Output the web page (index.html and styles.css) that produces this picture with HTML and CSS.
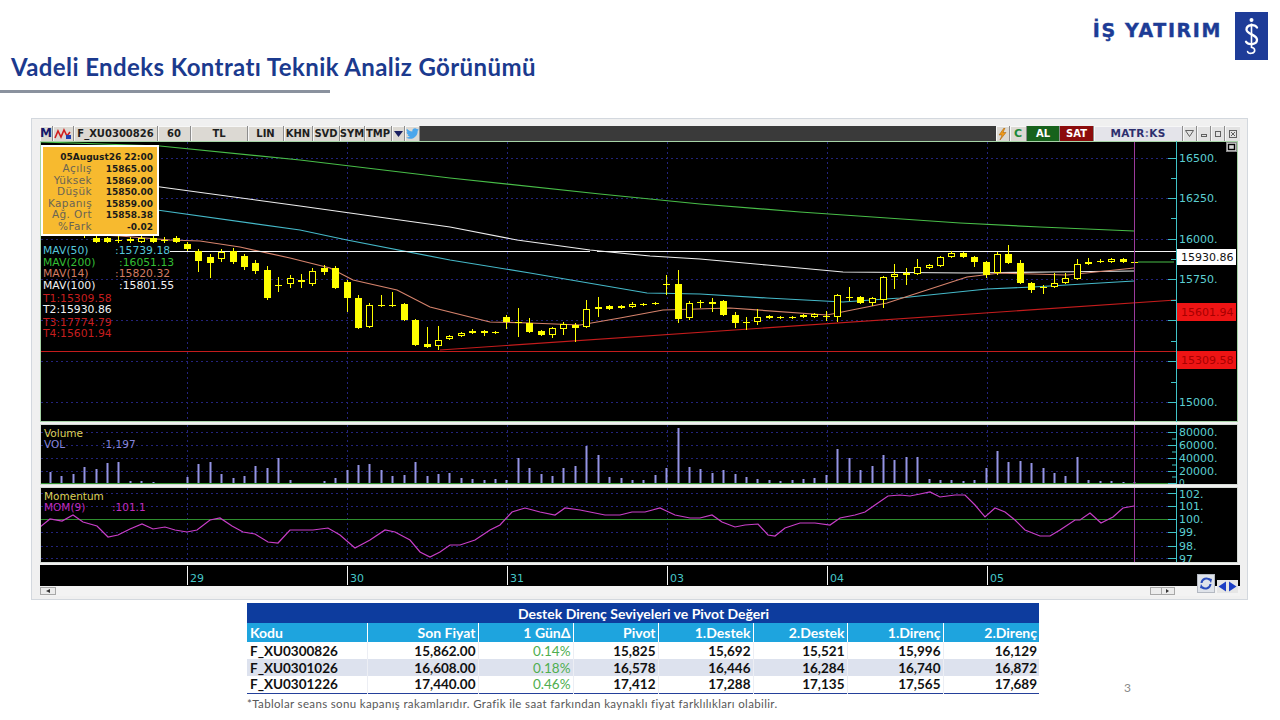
FILE: index.html
```html
<!DOCTYPE html>
<html lang="tr">
<head>
<meta charset="utf-8">
<title>Vadeli Endeks Kontratı Teknik Analiz Görünümü</title>
<link rel="stylesheet" href="styles.css">
</head>
<body>
<div class="slide">
  <header class="top">
    <div class="title-block">
      <h1 class="title">Vadeli Endeks Kontratı Teknik Analiz Görünümü</h1>
      <div class="title-rule"></div>
    </div>
    <div class="brand">
      <span class="brand-name">İŞ YATIRIM</span>
      <span class="brand-mark">
        <svg width="33" height="48" viewBox="0 0 33 48">
          <circle class="bm-fill" cx="16.5" cy="8" r="2"/>
          <path class="bm-thin" d="M16.5 11.5V36"/>
          <path class="bm-s" d="M22 15.5C20 12 11.5 12.3 11.5 17.5C11.5 22.5 22 22.3 22 27.8C22 33 13 33.3 11 29.8"/>
          <path class="bm-thin" d="M16.5 35.5C20.5 35.8 21 40.5 16.5 41.3C13.8 41.8 12.3 40.3 12.6 38.8"/>
        </svg>
      </span>
    </div>
  </header>

  <section class="chart-window">
    <div class="toolbar">
      <span class="tb tb-m">M</span>
      <span class="tb tb-ico">
        <svg width="18" height="12" viewBox="0 0 18 12"><path class="ico-red" d="M1 10L4 3L7 9L10 2L13 8L16 4"/><rect class="ico-blue" x="12" y="7" width="5" height="4"/></svg>
      </span>
      <span class="tb tb-code">F_XU0300826</span>
      <span class="tb tb-per">60</span>
      <span class="tb tb-cur">TL</span>
      <span class="tb tb-lin">LIN</span>
      <span class="tb tb-khn">KHN</span>
      <span class="tb tb-svd">SVD</span>
      <span class="tb tb-sym">SYM</span>
      <span class="tb tb-tmp">TMP</span>
      <span class="tb tb-drop"><svg width="9" height="6" viewBox="0 0 9 6"><path class="ico-navy" d="M0 0H9L4.5 6Z"/></svg></span>
      <span class="tb tb-tw">
        <svg width="13" height="11" viewBox="0 0 24 20"><path class="ico-tw" d="M23.954 2.569a10 10 0 01-2.825.775 4.958 4.958 0 002.163-2.723c-.951.555-2.005.959-3.127 1.184a4.92 4.92 0 00-8.384 4.482C7.691 6.094 4.066 4.13 1.64 1.161a4.822 4.822 0 00-.666 2.475c0 1.71.87 3.213 2.188 4.096a4.904 4.904 0 01-2.228-.616v.061a4.923 4.923 0 003.946 4.827 4.996 4.996 0 01-2.212.085 4.937 4.937 0 004.604 3.417 9.868 9.868 0 01-6.102 2.105c-.39 0-.779-.023-1.170-.067a13.995 13.995 0 007.557 2.209c9.054 0 13.999-7.496 13.999-13.986 0-.209 0-.42-.015-.63a9.936 9.936 0 002.46-2.548z"/></svg>
      </span>
      <span class="tb-gap"></span>
      <span class="tb tb-bolt"><svg width="9" height="12" viewBox="0 0 9 12"><path class="ico-bolt" d="M6 0L1 7H4L2 12L8 4.5H5L7 0Z"/></svg></span>
      <span class="tb tb-c">C</span>
      <span class="tb tb-al">AL</span>
      <span class="tb tb-sat">SAT</span>
      <span class="tb tb-mx">MATR<span class="mx-i">:</span>KS</span>
      <span class="tb tb-win"><svg width="9" height="7" viewBox="0 0 9 7"><path class="ico-line" d="M0.5 0.5H8.5L4.5 6.5Z"/></svg></span>
      <span class="tb tb-win"><svg width="8" height="8" viewBox="0 0 8 8"><rect class="ico-line" x="1.5" y="4.5" width="5" height="2"/></svg></span>
      <span class="tb tb-win"><svg width="8" height="8" viewBox="0 0 8 8"><rect class="ico-line" x="1.5" y="1.5" width="5" height="5"/></svg></span>
      <span class="tb tb-win tb-last"><svg width="8" height="8" viewBox="0 0 8 8"><rect class="ico-line" x="0.5" y="0.5" width="7" height="7"/><path class="ico-line" d="M2 2L6 6M6 2L2 6"/></svg></span>
    </div>

    <svg class="chart" viewBox="40 141 1200 455" width="1200" height="455">
      <defs>
        <clipPath id="clip-main"><rect x="41" y="142" width="1196" height="279"/></clipPath>
        <clipPath id="clip-vol"><rect x="41" y="425" width="1196" height="59"/></clipPath>
        <clipPath id="clip-mom"><rect x="41" y="488" width="1196" height="74"/></clipPath>
      </defs>
      <rect class="bg" x="40" y="141" width="1200" height="455"/>

      <!-- panels -->
      <rect class="panel panel-main" x="40.5" y="141.5" width="1197" height="280"/>
      <rect class="panel" x="40.5" y="424.5" width="1197" height="60"/>
      <rect class="panel" x="40.5" y="487.5" width="1197" height="75"/>
      <rect class="timebar" x="40" y="565" width="1200" height="21"/>

      <!-- grid -->
      <path class="grid" d="M41 158.5H1168M41 198.5H1168M41 239.5H1168M41 279.5H1168M41 320.5H1168M41 361.5H1168M41 402.5H1168"/>
      <path class="grid" d="M187.5 142V421M347.5 142V421M507.5 142V421M667.5 142V421M827.5 142V421M987.5 142V421"/>
      <path class="grid" d="M41 432.5H1168M41 445.5H1168M41 458.5H1168M41 471.5H1168"/>
      <path class="grid" d="M187.5 425V483M347.5 425V483M507.5 425V483M667.5 425V483M827.5 425V483M987.5 425V483"/>
      <path class="grid" d="M41 493.5H1168M41 506.5H1168M41 532.5H1168M41 546.5H1168M41 558.5H1168"/>
      <path class="grid" d="M187.5 488V562M347.5 488V562M507.5 488V562M667.5 488V562M827.5 488V562M987.5 488V562"/>

      <!-- main panel drawing -->
      <g clip-path="url(#clip-main)">
        <polyline class="ma ma200" points="41,142 160,146 300,160 450,178 600,194 700,204 800,212 960,223 1040,227 1134,231"/>
        <polyline class="ma ma200" points="1138,262 1174,262"/>
        <polyline class="ma ma100" points="41,183 153,186 300,206 450,227 517,240 590,250 650,256 700,259 767,265 843,272 967,273 1050,272 1134,271"/>
        <polyline class="ma ma50" points="41,205 157,210 300,230 347,240 450,260 530,273 647,293 700,294 767,298 843,302 900,298 987,289 1033,287 1134,281"/>
        <polyline class="ma ma14" points="41,232 120,236 170,240 200,241 240,247 290,258 330,268 353,280 397,290 430,307 490,322 530,323 580,325 620,318 663,310 730,308 827,315 887,303 967,277 1000,273 1067,275 1134,268"/>
        <path class="tl-white" d="M170 251.5H590M597 251.5H1176"/>
        <path class="tl-red" d="M41 351.5H1176"/>
        <path class="tl-red" d="M440 350L1176 300"/>
        <g id="candles"></g>
      </g>

      <!-- info box -->
      <rect class="info" x="42" y="146" width="116" height="89"/>
      <text class="ib-title" x="153" y="160">05August26 22:00</text>
      <text class="ib-label" x="92" y="172">Açılış</text><text class="ib-val" x="153" y="172">15865.00</text>
      <text class="ib-label" x="92" y="183.5">Yüksek</text><text class="ib-val" x="153" y="183.5">15869.00</text>
      <text class="ib-label" x="92" y="195">Düşük</text><text class="ib-val" x="153" y="195">15850.00</text>
      <text class="ib-label" x="92" y="206.5">Kapanış</text><text class="ib-val" x="153" y="206.5">15859.00</text>
      <text class="ib-label" x="92" y="218">Ağ. Ort</text><text class="ib-val" x="153" y="218">15858.38</text>
      <text class="ib-label" x="92" y="229.5">%Fark</text><text class="ib-val" x="153" y="229.5">-0.02</text>

      <!-- legend -->
      <text class="lg lg-c50" x="43" y="254">MAV(50)</text><text class="lg lg-c50" x="115" y="254">:15739.18</text>
      <text class="lg lg-c200" x="43" y="265.7">MAV(200)</text><text class="lg lg-c200" x="119" y="265.7">:16051.13</text>
      <text class="lg lg-c14" x="43" y="277.3">MAV(14)</text><text class="lg lg-c14" x="115" y="277.3">:15820.32</text>
      <text class="lg lg-w" x="43" y="289">MAV(100)</text><text class="lg lg-w" x="119" y="289">:15801.55</text>
      <text class="lg lg-r" x="43" y="301.7">T1:15309.58</text>
      <text class="lg lg-w" x="43" y="313.3">T2:15930.86</text>
      <text class="lg lg-r" x="43" y="325.7">T3:17774.79</text>
      <text class="lg lg-r" x="43" y="337.3">T4:15601.94</text>

      <!-- price axis -->
      <path class="axis" d="M1176.5 141V422"/>
      <path class="axis" d="M1168 158.5H1176M1168 198.5H1176M1168 239.5H1176M1168 279.5H1176M1168 320.5H1176M1168 361.5H1176M1168 402.5H1176M1171 178.5H1176M1171 218.5H1176M1171 259.5H1176M1171 300.5H1176M1171 341.5H1176M1171 382.5H1176"/>
      <text class="ax" x="1179" y="162">16500.</text>
      <text class="ax" x="1179" y="202">16250.</text>
      <text class="ax" x="1179" y="243">16000.</text>
      <text class="ax" x="1179" y="283">15750.</text>
      <text class="ax" x="1179" y="406">15000.</text>
      <rect class="lbl-white" x="1177" y="249" width="59" height="16"/>
      <text class="lbl-t-dark" x="1181" y="261">15930.86</text>
      <rect class="lbl-red" x="1177" y="303" width="59" height="18"/>
      <text class="lbl-t-red" x="1181" y="316">15601.94</text>
      <rect class="lbl-red" x="1177" y="351" width="59" height="18"/>
      <text class="lbl-t-red" x="1181" y="364">15309.58</text>
      <rect class="maxbtn" x="1226.5" y="142.5" width="10" height="9"/>
      <rect class="maxbtn-in" x="1228.5" y="144.5" width="6" height="5"/>

      <!-- volume -->
      <g clip-path="url(#clip-vol)">
        <path class="base-green" d="M41 483.5H1176"/>
        <g id="volume"></g>
        <path class="axis" d="M1176.5 424V485"/>
        <path class="axis" d="M1168 432.5H1176M1168 445.5H1176M1168 458.5H1176M1168 471.5H1176M1168 483.5H1176M1172 439H1176M1172 452H1176M1172 465H1176M1172 477H1176"/>
        <text class="ax" x="1179" y="436">80000.</text>
        <text class="ax" x="1179" y="449">60000.</text>
        <text class="ax" x="1179" y="462">40000.</text>
        <text class="ax" x="1179" y="475">20000.</text>
        <text class="ax ax-small" x="1179" y="486">0</text>
      </g>
      <text class="pn-title" x="44" y="437">Volume</text>
      <text class="pn-vol" x="44" y="448">VOL</text>
      <text class="pn-vol" x="102" y="448">:1,197</text>

      <!-- momentum -->
      <g clip-path="url(#clip-mom)">
        <path class="base-green" d="M41 519.5H1176"/>
        <polyline id="momentum" class="mom" points=""/>
        <path class="axis" d="M1176.5 487V563"/>
        <path class="axis" d="M1168 493.5H1176M1168 506.5H1176M1168 519.5H1176M1168 532.5H1176M1168 546.5H1176M1168 558.5H1176"/>
        <text class="ax" x="1179" y="498">102.</text>
        <text class="ax" x="1179" y="510">101.</text>
        <text class="ax" x="1179" y="523">100.</text>
        <text class="ax" x="1179" y="536">99.</text>
        <text class="ax" x="1179" y="550">98.</text>
        <text class="ax" x="1179" y="563">97</text>
      </g>
      <text class="pn-title" x="44" y="500">Momentum</text>
      <text class="pn-mom" x="44" y="511">MOM(9)</text>
      <text class="pn-mom" x="112" y="511">:101.1</text>

      <!-- cursor -->
      <path class="cursor" d="M1134.5 142V421M1134.5 425V484M1134.5 488V562"/>

      <!-- time axis -->
      <path class="tick-white" d="M187.5 566V585M347.5 566V585M507.5 566V585M667.5 566V585M827.5 566V585M987.5 566V585"/>
      <text class="tx" x="190" y="582">29</text>
      <text class="tx" x="350" y="582">30</text>
      <text class="tx" x="510" y="582">31</text>
      <text class="tx" x="670" y="582">03</text>
      <text class="tx" x="830" y="582">04</text>
      <text class="tx" x="990" y="582">05</text>

      <!-- scroll row -->
      <rect class="scrollrow" x="40" y="586" width="1200" height="10"/>
      <rect class="sbtn" x="40.5" y="587.5" width="15" height="7"/>
      <path class="sarrow" d="M46 591L50 589V593Z"/>
      <rect class="sbtn" x="1150.5" y="587.5" width="11" height="7"/>
      <rect class="sbtn" x="1161.5" y="587.5" width="13" height="7"/>
      <path class="sarrow" d="M1169 591L1166 589V593Z"/>
      <rect class="refresh" x="1197.5" y="574.5" width="17" height="18"/>
      <path class="swirl" d="M1201.5 583C1202 578.5 1207 577 1210 580M1210.5 584C1210 588.5 1205 590 1202 587"/>
      <path class="swirl-head" d="M1208 578L1212 579L1211 583ZM1204 589L1200 588L1201 584Z"/>
      <rect class="navbg" x="1217" y="580" width="21" height="13"/>
      <path class="nav" d="M1218.5 586.5L1226 581.5V591.5ZM1236.5 586.5L1229 581.5V591.5Z"/>
    </svg>
  </section>

  <section class="table-row">
    <div class="table-wrap">
      <table class="pivot">
        <colgroup>
          <col class="w-code"><col class="w-last"><col class="w-chg"><col class="w-piv">
          <col class="w-s1"><col class="w-s2"><col class="w-r1"><col class="w-r2">
        </colgroup>
        <thead>
          <tr class="pv-title"><th colspan="8">Destek Direnç Seviyeleri ve Pivot Değeri</th></tr>
          <tr class="pv-head">
            <th class="c-code">Kodu</th><th>Son Fiyat</th><th>1 GünΔ</th><th>Pivot</th>
            <th>1.Destek</th><th>2.Destek</th><th>1.Direnç</th><th>2.Direnç</th>
          </tr>
        </thead>
        <tbody>
          <tr>
            <td class="c-code">F_XU0300826</td><td>15,862.00</td><td class="c-chg">0.14%</td><td>15,825</td>
            <td>15,692</td><td>15,521</td><td>15,996</td><td>16,129</td>
          </tr>
          <tr class="alt">
            <td class="c-code">F_XU0301026</td><td>16,608.00</td><td class="c-chg">0.18%</td><td>16,578</td>
            <td>16,446</td><td>16,284</td><td>16,740</td><td>16,872</td>
          </tr>
          <tr>
            <td class="c-code">F_XU0301226</td><td>17,440.00</td><td class="c-chg">0.46%</td><td>17,412</td>
            <td>17,288</td><td>17,135</td><td>17,565</td><td>17,689</td>
          </tr>
        </tbody>
      </table>
      <p class="note">*Tablolar seans sonu kapanış rakamlarıdır. Grafik ile saat farkından kaynaklı fiyat farklılıkları olabilir.</p>
    </div>
    <span class="page-num">3</span>
  </section>
</div>
<script src="script.js"></script>
</body>
</html>
```

FILE: styles.css
```css
* { box-sizing: border-box; }
html, body { margin: 0; padding: 0; background: #ffffff; }
body {
  width: 1280px;
  height: 720px;
  overflow: hidden;
  font-family: "Lato", "Open Sans", sans-serif;
}
.slide { width: 1280px; height: 720px; }

/* header */
.top {
  display: flex;
  justify-content: space-between;
  align-items: flex-start;
  height: 93px;
}
.title-block { padding-top: 52px; }
.title {
  margin: 0 0 0 11px;
  font: 700 24px/29px "Lato", "Open Sans", sans-serif;
  letter-spacing: 0.4px;
  color: #1b3a8e;
  white-space: nowrap;
}
.title-rule {
  width: 330px;
  height: 3px;
  margin-top: 9px;
  background: #8a929e;
}
.brand {
  display: flex;
  align-items: flex-start;
  gap: 13px;
  margin: 12px 12px 0 0;
}
.brand-name {
  margin-top: 8px;
  font: 700 19px/21px "DejaVu Sans", sans-serif;
  letter-spacing: 1.6px;
  color: #1d3c96;
  -webkit-text-stroke: 0.4px #1d3c96;
}
.brand-mark {
  display: block;
  width: 33px;
  height: 48px;
  background: #1e3c98;
}
.brand-mark svg { display: block; }
.bm-fill { fill: #ffffff; }
.bm-thin { fill: none; stroke: #ffffff; stroke-width: 1.6; }
.bm-s { fill: none; stroke: #ffffff; stroke-width: 2.3; stroke-linecap: round; }

/* chart window */
.chart-window {
  margin: 25px 0 0 31px;
  width: 1217px;
  height: 482px;
  border: 1px solid #d3d8de;
  background: #f0f0f0;
  padding: 7px 7px 0 8px;
}
.toolbar {
  display: flex;
  height: 15px;
  background: #3a3a3a;
  font: 700 10px/15px "DejaVu Sans", sans-serif;
  color: #1e1e1e;
}
.tb {
  flex: none;
  display: flex;
  align-items: center;
  justify-content: center;
  height: 15px;
  background: #dcd9d3;
  border-right: 1px solid #8c8c8c;
  box-shadow: inset 1px 1px 0 #f7f7f7;
  white-space: nowrap;
}
.tb-gap { flex: 1; }
.tb-m { width: 13px; font-size: 12px; color: #16186a; }
.tb-ico { width: 21px; }
.tb-code { width: 84px; }
.tb-per { width: 33px; }
.tb-cur { width: 57px; }
.tb-lin { width: 36px; }
.tb-khn { width: 29px; }
.tb-svd { width: 27px; }
.tb-sym { width: 25px; }
.tb-tmp { width: 27px; }
.tb-drop { width: 13px; }
.tb-tw { width: 15px; }
.tb-bolt { width: 14px; }
.tb-c { width: 17px; font-size: 11px; color: #1e8a3a; }
.tb-al { width: 33px; background: #17621c; color: #ffffff; box-shadow: none; }
.tb-sat { width: 34px; background: #8c0c0c; color: #ffffff; box-shadow: none; }
.tb-mx { width: 89px; background: #e4e4ea; color: #2d2f6e; font-size: 10.5px; letter-spacing: 0.3px; }
.mx-i { color: #7a7ca8; }
.tb-win { width: 14px; background: #e2e2e2; }
.tb-last { width: 15px; border-right: none; }

.ico-red { fill: none; stroke: #d02020; stroke-width: 1.6; }
.ico-blue { fill: #2040b0; }
.ico-navy { fill: #1a2060; }
.ico-tw { fill: #4aa6ec; }
.ico-bolt { fill: #f09a1a; stroke: #a05a00; stroke-width: 0.5; }
.ico-line { fill: none; stroke: #606060; stroke-width: 1; }

/* chart svg */
.chart { display: block; width: 1200px; height: 455px; }
.bg { fill: #f0f0f0; }
.panel { fill: #000000; stroke: #d6dcd6; stroke-width: 1; }
.panel-main { stroke: #a6d3a6; }
.timebar { fill: #000000; }
.grid { fill: none; stroke: #23237a; stroke-width: 1; stroke-dasharray: 2 3; }
.ma { fill: none; stroke-width: 1.2; }
.ma200 { stroke: #48bd48; }
.ma100 { stroke: #eeeeee; }
.ma50 { stroke: #45b9c9; }
.ma14 { stroke: #d6836c; }
.tl-white { fill: none; stroke: #f4f4f4; stroke-width: 1.2; }
.tl-red { fill: none; stroke: #c41c1c; stroke-width: 1.2; }
.wick { stroke: #ffff00; stroke-width: 1; }
.body-fill { fill: #ffff00; }
.body-hollow { fill: #000000; stroke: #ffff00; stroke-width: 1; }

.info { fill: #f7ba2f; stroke: #ffffff; stroke-width: 2; }
.ib-title, .ib-val {
  font: 700 9px "DejaVu Sans", sans-serif;
  fill: #1a1a1a;
  text-anchor: end;
}
.ib-label {
  font: 400 10.5px "DejaVu Sans", sans-serif;
  letter-spacing: 0.4px;
  fill: #6a6454;
  text-anchor: end;
}
.lg { font: 400 10.8px "DejaVu Sans", sans-serif; }
.lg-c50 { fill: #55c6da; }
.lg-c200 { fill: #34bf34; }
.lg-c14 { fill: #d27c62; }
.lg-w { fill: #f2f2f2; }
.lg-r { fill: #c61e1e; }

.axis { fill: none; stroke: #40c4c8; stroke-width: 1; }
.ax { font: 400 11px "DejaVu Sans", sans-serif; fill: #5ccfd2; }
.ax-small { font-size: 9px; }
.lbl-white { fill: #ffffff; }
.lbl-red { fill: #ee1414; }
.lbl-t-dark { font: 400 11px "DejaVu Sans", sans-serif; fill: #111111; }
.lbl-t-red { font: 400 11px "DejaVu Sans", sans-serif; fill: #a80000; }
.maxbtn { fill: #d6d6d6; stroke: #8a8a8a; }
.maxbtn-in { fill: none; stroke: #000000; stroke-width: 1.4; }

.base-green { fill: none; stroke: #2e8e2e; stroke-width: 1; }
.vol { stroke: #9494e4; stroke-width: 2; }
.mom { fill: none; stroke: #c83ec8; stroke-width: 1.2; }
.pn-title { font: 400 10.5px "DejaVu Sans", sans-serif; fill: #dccf5a; }
.pn-vol { font: 400 10.5px "DejaVu Sans", sans-serif; fill: #8686dc; }
.pn-mom { font: 400 10.5px "DejaVu Sans", sans-serif; fill: #c02cc0; }
.cursor { fill: none; stroke: #9c3a9c; stroke-width: 1; }

.tick-white { fill: none; stroke: #f2f2f2; stroke-width: 1; }
.tx { font: 400 11px "DejaVu Sans", sans-serif; fill: #45c6c8; }
.scrollrow { fill: #f3f3f3; }
.sbtn { fill: #ececec; stroke: #a8a8a8; stroke-width: 1; }
.sarrow { fill: #333333; }
.refresh { fill: #dfe3ea; stroke: #b4b9c2; }
.swirl { fill: none; stroke: #2a4cbc; stroke-width: 2; }
.swirl-head { fill: #2a4cbc; }
.navbg { fill: #e6e6e6; }
.nav { fill: #1d3fc4; }

/* table */
.table-row {
  display: flex;
  align-items: flex-start;
  margin: 3px 0 0 247px;
}
.table-wrap { width: 792px; }
.pivot {
  width: 792px;
  border-collapse: collapse;
  table-layout: fixed;
  font: 700 13.5px "Lato", "Open Sans", sans-serif;
  color: #111111;
  border-bottom: 1.5px solid #24409a;
}
.w-code { width: 120px; }
.w-last { width: 111px; }
.w-chg { width: 95px; }
.w-piv { width: 85px; }
.w-s1 { width: 95px; }
.w-s2 { width: 94px; }
.w-r1 { width: 96px; }
.w-r2 { width: 96px; }
.pivot th, .pivot td {
  padding: 0 2px 0 3px;
  text-align: right;
  white-space: nowrap;
  overflow: hidden;
}
.pv-title th {
  height: 20px;
  background: #0d3c9e;
  color: #ffffff;
  text-align: center;
  font-size: 14px;
}
.pv-head th {
  height: 19px;
  background: #1ea4de;
  color: #ffffff;
  border-right: 1px solid #ffffff;
  font-size: 14px;
}
.pv-head th:last-child { border-right: none; }
.pivot td {
  height: 17px;
  line-height: 16px;
  border-right: 1px solid #eceef4;
}
.pivot td:last-child { border-right: none; }
.pivot .c-code { text-align: left; }
.pivot .alt td { background: #dde2ee; }
.pivot .c-chg { color: #4eae4e; font-weight: 400; }
.note {
  margin: 3px 0 0 0;
  font: 400 11.5px "Lato", "Open Sans", sans-serif;
  letter-spacing: 0.35px;
  color: #585858;
  white-space: nowrap;
}
.page-num {
  margin: 77px 0 0 85px;
  font: 400 12px "Lato", sans-serif;
  color: #8a8a8a;
}
```

FILE: script.js
```js
(function () {
  var NS = 'http://www.w3.org/2000/svg';
  function el(tag, attrs, parent) {
    var e = document.createElementNS(NS, tag);
    for (var k in attrs) e.setAttribute(k, attrs[k]);
    parent.appendChild(e);
    return e;
  }
  // [bodyTop, bodyBottom, high, low, filled]
  var candles = [
    [226,230,224,232,1],[228,232,225,234,1],[230,233,228,235,0],[232,236,230,238,1],
    [238,242,236,243,1],[238,242,237,243,1],[240,240,236,243,0],[239,241,237,243,0],
    [238,242,236,243,0],[238,242,236,243,1],[240,240,237,243,0],[238,242,236,243,1],
    [244,249,242,251,1],[251,261,249,272,1],[257,263,254,278,1],[252,259,249,262,0],
    [251,262,248,264,1],[256,267,254,270,1],[263,271,260,274,1],[270,298,266,300,1],
    [285,285,277,292,0],[278,284,275,288,0],[280,281,274,288,0],[271,284,268,286,0],
    [268,272,265,275,1],[268,288,266,289,1],[282,298,280,312,1],[298,328,295,329,1],
    [305,327,303,328,0],[305,305,295,307,0],[305,305,292,307,0],[304,320,303,321,1],
    [320,345,319,346,1],[344,347,327,348,1],[340,346,326,350,0],[336,339,335,340,0],
    [333,336,332,337,0],[331,333,329,334,0],[331,333,330,336,1],[332,333,331,334,1],
    [317,322,315,329,1],[322,322,308,337,0],[323,332,318,333,1],[331,335,330,336,1],
    [328,335,327,338,0],[324,329,322,335,0],[325,328,323,342,1],[309,327,300,328,0],
    [307,309,297,317,0],[306,309,305,310,1],[306,308,305,309,1],[304,307,302,308,0],
    [304,305,303,306,1],[303,304,302,305,1],[284,284,275,295,0],[284,319,270,323,1],
    [303,318,301,320,0],[302,302,300,308,0],[302,304,298,312,0],[301,315,300,316,1],
    [315,323,312,328,1],[322,322,317,330,0],[317,322,309,325,0],[316,318,315,319,1],
    [317,318,316,319,1],[317,318,316,319,1],[315,317,314,318,0],[314,317,313,318,0],
    [316,316,311,321,0],[295,317,294,322,0],[297,297,287,301,0],[297,303,296,304,1],
    [298,303,297,306,0],[277,300,276,308,0],[274,277,264,289,0],[273,275,268,285,0],
    [267,274,259,275,0],[265,268,264,269,0],[257,266,256,267,0],[253,257,251,258,0],
    [253,257,252,258,1],[257,262,256,267,1],[262,275,261,278,1],[254,273,252,275,0],
    [254,263,245,264,1],[263,283,260,284,1],[283,290,282,293,1],[287,287,285,294,0],
    [283,287,273,288,0],[278,283,273,284,0],[264,279,259,280,0],[262,264,258,265,0],
    [261,261,259,263,0],[259,262,258,263,0],[259,262,258,263,1],[262,262,260,263,0]
  ];
  var vols = [
    472,476,474,467,469,463,462,481,481,482,484,484,
    477,464,462,474,478,476,466,468,458,480,484,484,481,478,
    470,465,464,470,476,475,462,476,474,473,478,479,480,479,
    480,458,468,474,476,468,466,446,455,477,478,480,480,475,
    468,428,467,469,473,470,474,477,479,480,481,480,479,478,
    475,449,458,470,466,455,460,457,457,479,480,480,481,480,
    468,451,462,461,463,468,473,476,457,480,481,481,482,482
  ];
  var mom = '40,527 50,519 62,521 73,515 83,522 97,526 108,537 118,535 130,529 142,524 153,529 165,527 175,530 187,532 197,530 210,520 220,518 232,526 243,532 255,534 268,542 278,543 290,530 313,530 328,528 340,535 355,548 370,540 385,530 395,532 410,540 420,552 430,557 440,552 450,545 460,545 475,540 490,530 500,525 512,512 525,508 540,512 555,515 565,508 580,510 590,512 605,515 620,515 632,512 645,512 660,508 675,515 690,518 700,518 712,515 722,522 735,527 745,525 758,524 768,535 775,536 785,528 800,523 815,523 830,525 840,518 855,515 865,512 875,505 888,496 900,495 910,496 920,494 930,492 940,497 955,495 965,495 975,505 985,517 995,508 1005,512 1015,520 1025,530 1040,536 1050,536 1060,530 1075,520 1080,520 1090,513 1101,523 1113,517 1123,508 1134,506';

  var cg = document.getElementById('candles');
  candles.forEach(function (c, i) {
    var x = Math.round(50 + i * 11.41) + 0.5;
    var top = c[0], bot = c[1], hi = c[2], lo = c[3];
    el('line', { x1: x, x2: x, y1: hi, y2: lo, 'class': 'wick' }, cg);
    if (bot - top < 1) {
      el('line', { x1: x - 3.5, x2: x + 3.5, y1: top + 0.5, y2: top + 0.5, 'class': 'wick' }, cg);
    } else if (c[4]) {
      el('rect', { x: x - 3.5, y: top, width: 7, height: bot - top, 'class': 'body-fill' }, cg);
    } else {
      el('rect', { x: x - 3, y: top + 0.5, width: 6, height: Math.max(1, bot - top - 1), 'class': 'body-hollow' }, cg);
    }
  });

  var vg = document.getElementById('volume');
  vols.forEach(function (v, i) {
    if (v >= 483) return;
    var x = Math.round(50 + i * 11.41) + 0.5;
    el('line', { x1: x, x2: x, y1: v, y2: 483, 'class': 'vol' }, vg);
  });

  document.getElementById('momentum').setAttribute('points', mom);
})();
```
